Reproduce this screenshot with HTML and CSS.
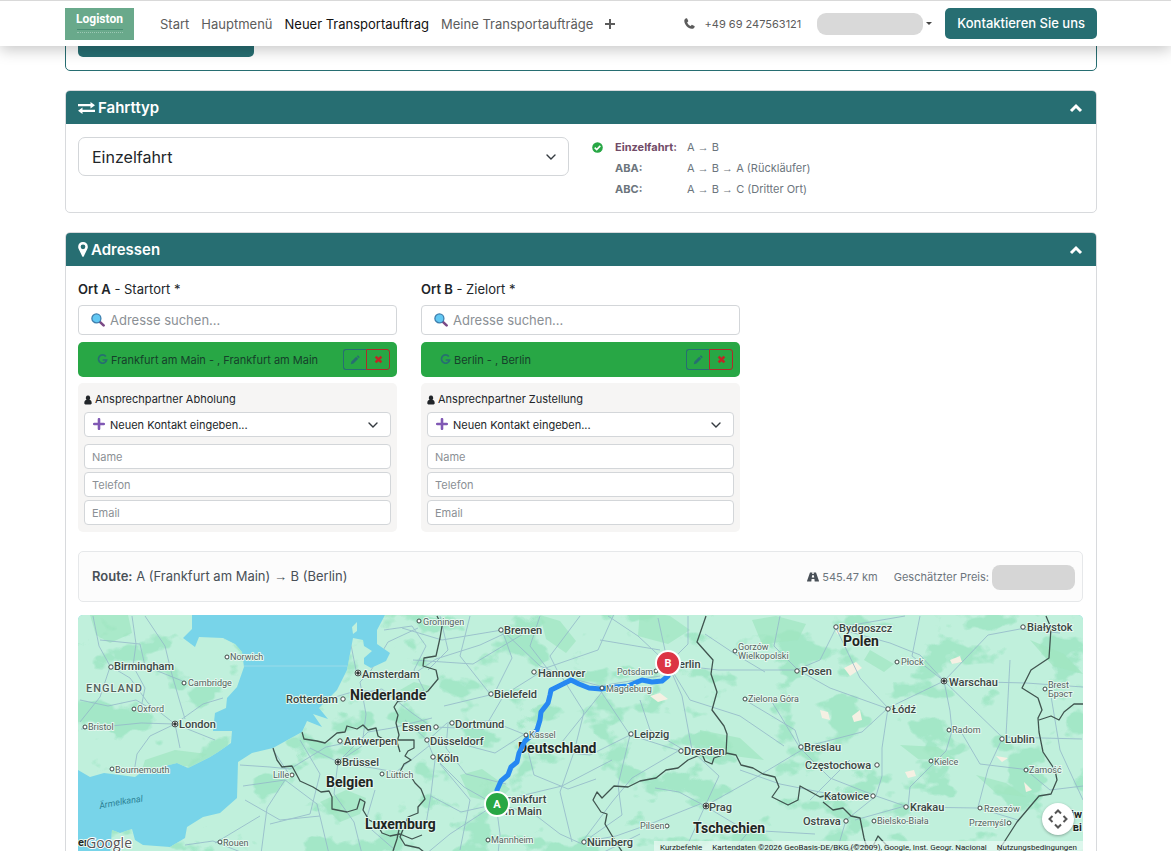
FILE: index.html
```html
<!DOCTYPE html>
<html lang="de">
<head>
<meta charset="utf-8">
<meta name="viewport" content="width=device-width, initial-scale=1">
<title>Neuer Transportauftrag – Logiston</title>
<link rel="stylesheet" href="styles.css">
</head>
<body>
<svg width="0" height="0" class="sprite" aria-hidden="true">
  <defs>
    <symbol id="i-search" viewBox="0 0 14 14">
      <path d="M8.6 8.6l4 3.8" stroke="#7b4a86" stroke-width="2.6" stroke-linecap="round"/>
      <circle cx="5.4" cy="5.4" r="4.5" fill="#62c8f3" stroke="#3d7fae" stroke-width="1.3"/>
    </symbol>
    <symbol id="i-plus" viewBox="0 0 12 12"><path d="M6 1.2v9.600M1.200 6h9.600" stroke="#8058b4" stroke-width="2.600" stroke-linecap="round"/></symbol>
    <symbol id="i-user" viewBox="0 0 10 12"><path d="M5 0.500a2.700 3 0 0 1 1.900 5.200C9 5.900 9.700 8 9.600 10c0 .900-.6 1.500-1.400 1.500H1.800C1 11.500.4 10.900.4 10 .3 8 1 5.900 3.100 5.700A2.700 3 0 0 1 5 .5z" fill="currentColor"/></symbol>
    <symbol id="i-up" viewBox="0 0 14 10"><path d="M2 8l5-5 5 5" fill="none" stroke="currentColor" stroke-width="3"/></symbol>
    <symbol id="i-pencil" viewBox="0 0 12 12"><path d="M1 11l.7-3.200L7.400 2.100l2.500 2.500-5.700 5.700zM8.100 1.400l.8-.7c.3-.3.7-.3 1 0l1.400 1.400c.3.3.3.7 0 1l-.7.800z" fill="currentColor"/></symbol>
    <symbol id="i-times" viewBox="0 0 10 10"><path d="M1.800 1.800l6.400 6.400M8.200 1.800L1.800 8.200" stroke="currentColor" stroke-width="2.800"/></symbol>
    <symbol id="i-google" viewBox="0 0 12 12"><path d="M9.600 2.700A4.500 4.500 0 1 0 10.500 6.500H6.200" fill="none" stroke="currentColor" stroke-width="1.800"/></symbol>
  </defs>
</svg>

<header class="topbar">
  <a class="logo" href="#" aria-label="Logiston"><span class="logo-name">Logiston</span><span class="logo-line"></span></a>
  <nav class="nav">
    <a href="#">Start</a>
    <a href="#">Hauptmenü</a>
    <a href="#" class="active">Neuer Transportauftrag</a>
    <a href="#">Meine Transportaufträge</a>
    <button class="more" aria-label="Mehr"><svg width="10" height="10" viewBox="0 0 10 10"><path d="M5 0v10M0 5h10" stroke="currentColor" stroke-width="2"/></svg></button>
  </nav>
  <a class="phone" href="tel:+4969247563121">
    <svg width="11" height="11" viewBox="0 0 11 11"><path d="M2.500.3C1.200.5.200 1.700.3 3c.3 3.800 3.600 7.400 7.400 7.800 1.500.1 2.800-.8 3-2.100 0-.3-.1-.5-.3-.6L8.300 6.900c-.3-.1-.5-.1-.7.1l-.9 1C5.300 7.400 3.700 5.900 3.100 4.400l1-.9c.2-.2.2-.4.1-.7L3.100.6C3 .4 2.800.3 2.500.3z" fill="currentColor"/></svg>
    <span>+49 69 247563121</span>
  </a>
  <button class="account" aria-label="Benutzerkonto"><span class="account-name"></span><span class="caret"></span></button>
  <a class="cta" href="#">Kontaktieren Sie uns</a>
</header>

<main class="page">
  <section class="card card-outline"><button class="peek" aria-label="Auftrag"></button></section>

  <section class="card">
    <h2 class="card-head">
      <svg width="17" height="12" viewBox="0 0 17 12"><path d="M0 3.200h14M3 8.800h14" stroke="currentColor" stroke-width="2.200"/><path d="M12.500 0L17 3.200l-4.500 3.200zM4.500 5.600L0 8.800 4.500 12z" fill="currentColor"/></svg>
      <span>Fahrttyp</span>
      <button class="toggle" aria-label="Fahrttyp einklappen"><svg width="14" height="10"><use href="#i-up"/></svg></button>
    </h2>
    <div class="card-body trip">
      <select class="select-lg" aria-label="Fahrttyp"><option>Einzelfahrt</option><option>ABA</option><option>ABC</option></select>
      <dl class="legend">
        <svg width="11" height="11" viewBox="0 0 11 11"><circle cx="5.500" cy="5.500" r="5.300" fill="#28a745"/><path d="M2.700 5.600l2 2 3.600-3.700" fill="none" stroke="#fff" stroke-width="1.600"/></svg>
        <dt class="on">Einzelfahrt:</dt><dd>A <i>→</i> B</dd>
        <dt>ABA:</dt><dd>A <i>→</i> B <i>→</i> A (Rückläufer)</dd>
        <dt>ABC:</dt><dd>A <i>→</i> B <i>→</i> C (Dritter Ort)</dd>
      </dl>
    </div>
  </section>

  <section class="card">
    <h2 class="card-head">
      <svg width="10" height="15" viewBox="0 0 9 14"><path fill-rule="evenodd" d="M4.500 0A4.400 4.400 0 0 1 9 4.400c0 1-.2 1.500-.5 2.100L5.300 13.200c-.3.800-1.300.8-1.600 0L.5 6.500C.2 5.900 0 5.400 0 4.400A4.400 4.400 0 0 1 4.500 0zm0 2.300a2.200 2.200 0 1 0 0 4.400 2.200 2.200 0 0 0 0-4.400z" fill="currentColor"/></svg>
      <span>Adressen</span>
      <button class="toggle" aria-label="Adressen einklappen"><svg width="14" height="10"><use href="#i-up"/></svg></button>
    </h2>
    <div class="card-body">
      <div class="places">
        <div class="place">
          <label class="place-label" for="a-search"><b>Ort A</b> - Startort *</label>
          <div class="field"><svg width="14" height="14"><use href="#i-search"/></svg><input id="a-search" class="search" placeholder="Adresse suchen..."></div>
          <div class="chosen"><svg width="11" height="11"><use href="#i-google"/></svg><span>Frankfurt am Main - , Frankfurt am Main</span>
            <div class="pair"><button aria-label="Bearbeiten"><svg width="10" height="10"><use href="#i-pencil"/></svg></button><button class="del" aria-label="Entfernen"><svg width="9" height="9"><use href="#i-times"/></svg></button></div></div>
          <div class="contact">
            <label for="a-contact"><svg width="8" height="10"><use href="#i-user"/></svg>Ansprechpartner Abholung</label>
            <div class="field"><svg width="12" height="12"><use href="#i-plus"/></svg><select id="a-contact" class="select-sm"><option>Neuen Kontakt eingeben...</option></select></div>
            <input placeholder="Name" aria-label="Name Abholung">
            <input placeholder="Telefon" aria-label="Telefon Abholung">
            <input placeholder="Email" aria-label="Email Abholung">
          </div>
        </div>
        <div class="place">
          <label class="place-label" for="b-search"><b>Ort B</b> - Zielort *</label>
          <div class="field"><svg width="14" height="14"><use href="#i-search"/></svg><input id="b-search" class="search" placeholder="Adresse suchen..."></div>
          <div class="chosen"><svg width="11" height="11"><use href="#i-google"/></svg><span>Berlin - , Berlin</span>
            <div class="pair"><button aria-label="Bearbeiten"><svg width="10" height="10"><use href="#i-pencil"/></svg></button><button class="del" aria-label="Entfernen"><svg width="9" height="9"><use href="#i-times"/></svg></button></div></div>
          <div class="contact">
            <label for="b-contact"><svg width="8" height="10"><use href="#i-user"/></svg>Ansprechpartner Zustellung</label>
            <div class="field"><svg width="12" height="12"><use href="#i-plus"/></svg><select id="b-contact" class="select-sm"><option>Neuen Kontakt eingeben...</option></select></div>
            <input placeholder="Name" aria-label="Name Zustellung">
            <input placeholder="Telefon" aria-label="Telefon Zustellung">
            <input placeholder="Email" aria-label="Email Zustellung">
          </div>
        </div>
      </div>

      <div class="route">
        <div class="route-text"><b>Route:</b> A (Frankfurt am Main) <i>→</i> B (Berlin)</div>
        <div class="route-meta">
          <span class="km"><svg width="12" height="10" viewBox="0 0 12 10"><path fill-rule="evenodd" d="M3 .5h2.400L5.200 2h1.600L6.600.5H9L12 9c0 .4-.2.6-.5.600H7.700L7.400 7H4.600l-.3 2.600H.5C.2 9.600 0 9.400 0 9zM5.100 3.200L4.800 5.600h2.400l-.3-2.400z" fill="currentColor"/></svg>545.47 km</span>
          <span>Geschätzter Preis:</span><span class="price"></span>
        </div>
      </div>

      <div class="map">
        <svg class="map-art" viewBox="78 615 1005 240" preserveAspectRatio="xMidYMid slice" role="img" aria-label="Karte der Route von Frankfurt am Main nach Berlin">
          <defs>
            <filter id="veg" x="0" y="0" width="1" height="1" color-interpolation-filters="sRGB">
              <feTurbulence type="fractalNoise" baseFrequency="0.022 0.03" numOctaves="4" seed="11"/>
              <feColorMatrix values="0 0 0 0 0.62  0 0 0 0 0.90  0 0 0 0 0.77  14 0 0 0 -8"/>
            </filter>
            <path id="land" d="M78 615H192V629L183 638 195 647 199 637 223 638 235 644 242 652 244 667 237 687 227 698 226 708 215 713 213 731 232 731 231 743 218 752 210 757 188 768 177 763 157 768 146 769 135 777 120 775 104 773 90 777 78 770ZM110 855L112 830 120 833 132 829 135 840 143 845 170 847 185 838 187 827 203 817 220 813 237 798 238 762 252 753 273 748 302 732 307 721 322 727 313 714 328 719 319 708 325 702 337 690 347 670 353 638 363 640 364 646 372 651 364 658 364 664 371 668 386 661 390 653 377 644 377 630 385 615H1083V855ZM352 627L357 622 357 631 353 634Z"/>
            <clipPath id="clip"><use href="#land"/></clipPath>
          </defs>
          <rect x="78" y="615" width="1005" height="240" fill="#78d4e9"/>
          <use href="#land" fill="#c0f0dc"/>
          <g clip-path="url(#clip)">
            <rect x="78" y="615" width="1005" height="240" filter="url(#veg)" opacity=".85"/>
            <g fill="#9fe5c1" opacity=".7">
              <path d="M90 615l38 0 4 18-22 10-14-8zM145 760l30-10 32 4-18 12-26 3-22 4zM320 802l26-12 20 8-6 16-20 8zM400 690l14-8 16 4-8 12zM540 615l20 6 16 20-10 12-20-14zM460 775l22-6 28 20-14 14-26-6zM752 620l24-4 30 8-8 16-36 4zM640 610l30 6 20 14-22 14-30-8zM700 730l40 8 24 22-30-4-34-12zM1030 640l34 14 19 20-30-8zM900 745l38 2 20 14-40-2zM870 650l24 14-10 8-20-12zM976 775l30 8 20 14-30-4z"/>
            </g>
            <g fill="#f5f0e3"><path d="M650 696l10-3 8 6-10 3zM844 668l12-6 6 6-12 8zM950 660l10-4 2 6-10 2zM820 710l8 2 2 8-8-2zM852 716l8-6 2 10-8 2zM905 772l9-2 2 6-8 2zM996 756l12 2-6 4zM1024 782l8 8-6 2zM835 630l6 2-3 3z"/></g>
            <g class="roads">
              <path d="M93 616l6 30 11 20 20 12 18 25 27 21M132 616l4 28-3 22 12 22-4 20M145 616l20 30 6 25 8 28 6 20M110 667l-10 30-20 25M175 724l-34-1-60 6M175 724l-25 12-13 18-3 18M175 724l5 24M175 724l40 16M175 724l28-20 20-6M100 640l40 4 5 22 40 16M80 700l28 6 28-6 20 12"/>
              <path d="M240 765l30 2 20 2 36-22 30-6M285 780l-18 28-6 46M285 780l32 24 12 50M285 780l-42 6M273 750l16 24M245 800l35 20 40-4M215 843l45-27M185 845l28-4 30 12M338 762l-28-14M338 762l24-16 4-32-6-32 10-10 18-30 30-14M338 762l58 10 38-30M338 762l-4 32 20 28 8 32M338 762l30-30 24-4 40-10M360 675l46 4 30-20 44-14 30-14M352 695l30-6 30 24 20 14"/>
              <path d="M434 727l50 2 20-34 40-25M434 757l30 30 32 18M427 741l20-18 44-2 40 16M405 720l22 20 8 20-4 34-5 30M431 796l30 16 36-8M496 804l4 30-2 20M496 804l38 10 26 20 22 10M496 804l-46 30-24 20M502 630l10 28-18 36-50 12M502 630l38 36 20 8 24 38-10 40-14 40 12 50M502 630l-60 10-40-12M540 670l58-20 16-36M540 670l60 16 60-10M600 690l30 45 50 16M602 692l-40 50M630 735l-12 50 4 30-40 28"/>
              <path d="M668 664l-30-28-30-20M668 664l-10-46M668 664l20-20 0-28M668 664l14 32 10 54M668 664l50 6 80 0M668 664l22 36 50 16 44 30M630 735l-40 20-40-4M582 842l30-40 20-24 46-27M582 842l34-6 34-12 50-20M705 806l-26-14-24-4M705 806l14-30-28-26M705 806l40 24 70 4M705 806l-18 40M705 806l50-28 50-30M735 654l30 18M735 654l-30-20M745 700l50 30 6 18M798 670l32 18 56 20M836 628l-16 32-24 10"/>
              <path d="M888 708l56-27M888 708l-6 40 0 28-6 20M888 708l-28-30-24-50M944 681l-24-26-30-12-54-15M944 681l44-46 32-6 40 4M944 681l6 30 2 20-6 20-36 36-2 20M944 681l58 56 80 2M944 681l82 2 57 4M1002 739l-14 30-10 38M800 748l62-16 26-24M800 748l30 30 46 18M876 796l32 11 70 1 40 12M876 796l-30 24-10 34M800 748l-28-46-27-3M920 616l-8 40 32 25M1050 690l10 60 23 50M1026 770l24 20 33-4M600 854l40-20M730 854l20-24M855 820l50-14"/>
              <path d="M384 630l28-4 14 20-12 24 10 20-20 12M440 616l8 34-20 20M470 616l-10 40 30 38M413 660l60 4 50-30M448 724l-2 24 20 26 40 10M465 745l30 8 28-18M460 850l10-50-30-36M524 735l10 40 34 14 28-10M540 616l-10 30 20 26M560 676l-10-20 30-40M600 640l60 10M612 760l-50 26-50 12M640 700l10 30 34 20M350 640l6 30M325 700l34-10 30 4M300 740l20 34-10 40-40 10M375 790l-10 34 30 26M780 616l-6 30 24 24M850 760l-40 40M960 730l20 34 50 6M905 616l-70 12M1010 660l-4 76M740 770l40 14 50 10"/>
            </g>
            <path class="border" d="M302 732l2 7 13 2 8 2 12-10 8-1 2-6 10 3 6-4 5 5 8-2 2 8 10 6 10-2 16 0 0 8-6 3-3 5 6 4-7 4-4 8 10 3 5 8 6 6 4 10-7 8 0 6-10 4-8 20 5 8 14 3 10 8 8 8M273 748l4 12 5 7 10-1 8 15 13 6 8 5 8-1 3 6 0 12 15 3 10-3 3-10 5 3-2 8 6 10 8 4 5 9 8 3 10-2 12 5 10-4M442 626l-2 12-4 18-12 2-1 8 13 4 2 9-10 12-14 8-16 2-4 6 4 8-2 8 3 12-2 7 3 10M393 851l4-12 3-14M437 616l5 10"/>
            <path class="border" d="M706 616l-9 26 16 18-2 14 6 18-5 18 12 16 3 8-1 20-12 4-2 6-7-3-3-7-14 6-10 8-12 2-10 8-16 3-12 6-14-1-12 12-5-6-4 8 8 12 6 2-2 10 12 20 12 18M726 753l10 2 5 10 12 3 10 6 12 3 4 10-7 10 16 8 10-5 2-14 20 11 8-2 10 5M823 802l10 8 10-2 8 8 9 2 4 20 3 10M848 851l8-6 16 3 6-12 12 13M1046 616l5 12-2 30-18 12-9 18 16 10 4 12-4 8 1 14 4 20 12 18 2 10-6 14-12 2-22 26-18 28 6 8M1039 720l12-4 8 4 5-8 10-8 9 0"/>
            <path d="M78 855v-6l12-2 12 8z" fill="#9fe5c1"/>
          </g>
          <path d="M244 666H347" stroke="#9adbe9"/>
          <path id="channel" d="M100 809q22-5 48-8" fill="none"/>
          <text class="water"><textPath href="#channel">Ärmelkanal</textPath></text>

          <g class="country">
            <text x="350" y="700">Niederlande</text><text x="326" y="787">Belgien</text><text x="365" y="829">Luxemburg</text>
            <text x="518" y="753">Deutschland</text><text x="693" y="833">Tschechien</text><text x="843" y="646">Polen</text>
          </g>
          <text class="region" x="86" y="692">ENGLAND</text>
          <path class="trail" d="M497 800l0-10 4-9 7-6 3-8 6-5 2-9 6-12 7-6 5-5 3-10 1-8 7-9 2-8 1-5 10-5 10-5 8 4 10 4 12 1 14-2 13-1 14-6 10 2 10-1 6-5"/>
          <g class="city">
            <circle cx="111" cy="667" r="2.200"/><text x="114" y="670">Birmingham</text>
            <circle cx="343" cy="699" r="2.200"/><text x="286" y="703">Rotterdam</text>
            <circle cx="340" cy="741" r="2.200"/><text x="344" y="745">Antwerpen</text>
            <circle cx="436" cy="727" r="2.200"/><text x="402" y="731">Essen</text>
            <circle cx="452" cy="723" r="2.200"/><text x="455" y="728">Dortmund</text>
            <circle cx="427" cy="740" r="2.200"/><text x="430" y="745">Düsseldorf</text>
            <circle cx="433" cy="757" r="2.200"/><text x="437" y="762">Köln</text>
            <circle cx="501" cy="630" r="2.200"/><text x="504" y="634">Bremen</text>
            <circle cx="534" cy="672" r="2.200"/><text x="538" y="677">Hannover</text>
            <circle cx="491" cy="694" r="2.200"/><text x="494" y="698">Bielefeld</text>
            <circle cx="631" cy="734" r="2.200"/><text x="634" y="738">Leipzig</text>
            <circle cx="681" cy="751" r="2.200"/><text x="684" y="755">Dresden</text>
            <circle cx="584" cy="842" r="2.200"/><text x="587" y="846">Nürnberg</text>
            <circle cx="797" cy="671" r="2.200"/><text x="801" y="675">Posen</text>
            <circle cx="836" cy="627" r="2.200"/><text x="839" y="632">Bydgoszcz</text>
            <circle cx="1023" cy="627" r="2.200"/><text x="1027" y="631">Białystok</text>
            <circle cx="888" cy="709" r="2.200"/><text x="892" y="713">Łódź</text>
            <circle cx="801" cy="747" r="2.200"/><text x="804" y="751">Breslau</text>
            <circle cx="877" cy="765" r="2.200"/><text x="805" y="769">Częstochowa</text>
            <circle cx="1002" cy="739" r="2.200"/><text x="1005" y="743">Lublin</text>
            <circle cx="873" cy="796" r="2.200"/><text x="824" y="800">Katowice</text>
            <circle cx="906" cy="807" r="2.200"/><text x="910" y="811">Krakau</text>
            <circle cx="846" cy="821" r="2.200"/><text x="803" y="825">Ostrava</text>
            <text x="679" y="668">erlin</text><text x="507" y="803">rankfurt</text><text x="505" y="815">m Main</text>
            <text x="362" y="678">Amsterdam</text><text x="179" y="728">London</text><text x="342" y="766">Brüssel</text>
            <text x="709" y="811">Prag</text><text x="949" y="686">Warschau</text>
            <text class="dark end" x="1082" y="818">iw</text><text class="dark end" x="1082" y="831">ві</text><text class="dark" x="78" y="846">er</text>
          </g>
          <g class="capital">
            <g><circle cx="358" cy="673" r="2.900"/><circle cx="175" cy="724" r="2.900"/><circle cx="338" cy="762" r="2.900"/><circle cx="706" cy="806" r="2.900"/><circle cx="944" cy="681" r="2.900"/></g>
            <g class="dot"><circle cx="358" cy="673" r="1.300"/><circle cx="175" cy="724" r="1.300"/><circle cx="338" cy="762" r="1.300"/><circle cx="706" cy="806" r="1.300"/><circle cx="944" cy="681" r="1.300"/></g>
          </g>
          <g class="town">
            <circle cx="227" cy="657" r="2"/><text x="230" y="660">Norwich</text>
            <circle cx="184" cy="683" r="2"/><text x="188" y="686">Cambridge</text>
            <circle cx="134" cy="709" r="2"/><text x="137" y="712">Oxford</text>
            <circle cx="85" cy="727" r="2"/><text x="88" y="730">Bristol</text>
            <circle cx="112" cy="769" r="2"/><text x="115" y="773">Bournemouth</text>
            <circle cx="220" cy="842" r="2"/><text x="223" y="846">Rouen</text>
            <circle cx="292" cy="775" r="2"/><text x="273" y="778">Lille</text>
            <circle cx="382" cy="774" r="2"/><text x="386" y="778">Lüttich</text>
            <circle cx="419" cy="621" r="2"/><text x="423" y="625">Groningen</text>
            <circle cx="526" cy="735" r="2"/><text x="529" y="738">Kassel</text>
            <circle cx="488" cy="840" r="2"/><text x="491" y="843">Mannheim</text>
            <circle cx="656" cy="671" r="2"/><text x="617" y="675">Potsdam</text>
            <circle cx="602" cy="688" r="2"/><text x="606" y="692">Magdeburg</text>
            <circle cx="735" cy="651" r="2"/><text x="738" y="650">Gorzów</text><text x="738" y="659">Wielkopolski</text>
            <circle cx="745" cy="699" r="2"/><text x="748" y="702">Zielona Góra</text>
            <circle cx="667" cy="826" r="2"/><text x="640" y="829">Pilsen</text>
            <circle cx="897" cy="662" r="2"/><text x="901" y="665">Płock</text>
            <circle cx="949" cy="730" r="2"/><text x="952" y="733">Radom</text>
            <circle cx="931" cy="761" r="2"/><text x="934" y="765">Kielce</text>
            <circle cx="1026" cy="770" r="2"/><text x="1029" y="773">Zamość</text>
            <circle cx="980" cy="808" r="2"/><text x="984" y="812">Rzeszów</text>
            <circle cx="1009" cy="823" r="2"/><text x="969" y="826">Przemyśl</text>
            <circle cx="874" cy="821" r="2"/><text x="877" y="824">Bielsko-Biała</text>
            <circle cx="1045" cy="689" r="2"/><text x="1048" y="688">Brest</text><text x="1048" y="697">Брэст</text>
          </g>
          <g class="pin">
            <circle cx="497" cy="804" r="12"/><text x="497" y="808">A</text>
            <circle class="goal" cx="668" cy="663" r="12"/><text x="668" y="667">B</text>
          </g>
          <text class="google" x="86" y="848">Google</text>
        </svg>
        <button class="map-move" aria-label="Kartenansicht bewegen"><svg width="20" height="20" viewBox="0 0 20 20"><path d="M7 4.500l3-3 3 3M7 15.500l3 3 3-3M4.500 7l-3 3 3 3M15.500 7l3 3-3 3" fill="none" stroke="#555" stroke-width="2"/></svg></button>
        <div class="credits"><a href="#">Kurzbefehle</a><span>Kartendaten ©2026 GeoBasis-DE/BKG (©2009), Google, Inst. Geogr. Nacional</span><a href="#">Nutzungsbedingungen</a></div>
      </div>
    </div>
  </section>
</main>
</body>
</html>
```
FILE: styles.css
```css
* { box-sizing: border-box; }
body {
  margin: 0;
  height: 100vh;
  overflow: hidden;
  background: #fff;
  color: #212529;
  font-family: Inter, "Noto Sans", sans-serif;
  font-size: 13px;
  line-height: 20px;
}
button, input, select { font: inherit; color: inherit; margin: 0; }
button { padding: 0; border: 0; background: none; cursor: pointer; }
a { color: inherit; text-decoration: none; }
i { font-family: "Liberation Sans", sans-serif; font-style: normal; line-height: 1; }
svg { flex: none; display: block; }
.sprite { position: absolute; }

/* top bar */
.topbar {
  position: relative;
  z-index: 5;
  display: flex;
  align-items: center;
  height: 46px;
  padding: 0 74px 0 65px;
  border-top: 1px solid #d9d9d9;
  background: #fff;
  box-shadow: 0 4px 14px rgba(0, 0, 0, .22);
  color: #5c5c5c;
}
.logo {
  display: flex;
  flex-direction: column;
  align-items: center;
  gap: 2px;
  width: 69px;
  height: 32px;
  padding-top: 4px;
  background: #69a98b;
  color: #fff;
}
.logo-name { font: 700 12px/15px "Roboto", sans-serif; }
.logo-line { width: 46px; height: 4px; border-top: 1px solid #4a8d74; border-bottom: 1px dotted #9cc8b4; }
.nav { display: flex; align-items: center; gap: 12px; margin-left: 26px; }
.nav .active { color: #111; }
.phone { display: flex; align-items: center; gap: 10px; margin-left: auto; font-size: 11px; }
.account { display: flex; align-items: center; gap: 3px; margin: 0 13px 0 16px; }
.account-name { width: 106px; height: 22px; border-radius: 9px; background: #d9d9d9; }
.caret { border: 3px solid transparent; border-top-color: #444; border-bottom: 0; }
.cta {
  padding: 5px 12px;
  border-radius: 5px;
  background: #276e72;
  color: #fff;
  font-weight: 500;
  line-height: 21px;
}

/* cards */
.page { display: flex; flex-direction: column; gap: 19px; padding: 0 74px 0 65px; }
.card { border: 1px solid #d8dadd; border-radius: 5px; background: #fff; }
.card-outline { margin-top: -7px; padding: 0 12px 13px; border-color: #276e72; }
.peek { display: block; width: 176px; height: 17px; border-radius: 0 0 5px 5px; background: #276e72; }
.card-head {
  display: flex;
  align-items: center;
  gap: 3px;
  margin: 0;
  padding: 6px 13px 6px 12px;
  border-radius: 4px 4px 0 0;
  background: #276e72;
  color: #fff;
  font-size: 15px;
  font-weight: 600;
  line-height: 21px;
}
.toggle { margin-left: auto; }
.card-body { padding: 13px 13px 12px 12px; }
.trip { display: grid; grid-template-columns: 491px 1fr; gap: 23px; align-items: start; }

/* form controls */
input, select {
  width: 100%;
  border: 1px solid #d3d6d9;
  border-radius: 4px;
  background-color: #fff;
  outline: 0;
}
input::placeholder { color: #8b9095; opacity: 1; }
select {
  appearance: none;
  background-image: url("data:image/svg+xml,%3Csvg xmlns='http://www.w3.org/2000/svg' viewBox='0 0 12 12'%3E%3Cpath d='M2 4l4 4 4-4' fill='none' stroke='%23343a40' stroke-width='1.400' stroke-linecap='round'/%3E%3C/svg%3E");
  background-repeat: no-repeat;
  background-position: right 11px center;
  background-size: 12px;
}
.select-lg { height: 39px; padding: 0 13px; border-radius: 7px; font-size: 16px; }
.legend {
  display: grid;
  grid-template-columns: 11px 60px 1fr;
  column-gap: 12px;
  align-items: center;
  margin: 0;
  color: #6c757d;
  font-size: 11px;
  line-height: 21px;
}
.legend dt { grid-column: 2; font-weight: 700; white-space: nowrap; }
.legend dd { grid-column: 3; margin: 0; }
.legend .on { color: #714b67; }

/* addresses */
.places { display: grid; grid-template-columns: repeat(2, 319px); gap: 24px; }
.place { display: flex; flex-direction: column; }
.place-label { margin-bottom: 6px; }
.place-label b { font-weight: 600; }
.field { position: relative; }
.field > svg { position: absolute; left: 13px; top: 8px; }
.search { display: block; height: 30px; padding: 0 31px; }
.chosen {
  display: flex;
  align-items: center;
  gap: 3px;
  height: 35px;
  margin: 7px 0 6px;
  padding: 0 7px 0 19px;
  border-radius: 5px;
  background: #28a745;
  color: #15412a;
  font-size: 11px;
}
.chosen > svg { color: #276e72; }
.pair { display: flex; margin-left: auto; }
.pair button {
  display: grid;
  place-items: center;
  width: 23px;
  height: 21px;
  border: 1px solid #276e72;
  border-right: 0;
  border-radius: 3px 0 0 3px;
  color: #276e72;
}
.pair .del { width: 24px; border: 1px solid #b02a2a; border-radius: 0 3px 3px 0; color: #c02626; }
.contact {
  display: flex;
  flex-direction: column;
  gap: 3px;
  padding: 7px 6px;
  border-radius: 5px;
  background: #f6f5f4;
  font-size: 11px;
}
.contact label { display: flex; align-items: center; gap: 3px; line-height: 19px; }
.contact input, .contact select { height: 25px; padding: 0 7px; }
.contact .field { margin-bottom: 4px; }
.contact .field > svg { left: 9px; top: 6px; }
.contact select { display: block; padding-left: 25px; }

/* route summary */
.route {
  display: flex;
  align-items: center;
  justify-content: space-between;
  margin: 19px 0 13px;
  padding: 12px 7px 11px 13px;
  border: 1px solid #e6e8ea;
  border-radius: 5px;
  background: #fcfcfc;
  color: #495057;
  line-height: 26px;
}
.route-text { align-self: flex-start; line-height: 24px; }
.route-text b { font-weight: 600; }
.route-meta { display: flex; align-items: center; gap: 3px; font-size: 11px; color: #6c757d; }
.km { display: flex; align-items: center; gap: 3px; margin-right: 13px; }
.km svg { color: #495057; }
.price { width: 83px; height: 25px; border-radius: 8px; background: #d6d6d6; }

/* map */
.map { position: relative; overflow: hidden; border-radius: 5px; }
.map-art { width: 100%; height: 240px; font-family: Roboto, sans-serif; }
.roads { fill: none; stroke: #93b7c9; stroke-width: 1; stroke-linejoin: round; opacity: .8; }
.border { fill: none; stroke: #40544f; stroke-width: 1.3; stroke-linejoin: round; }
.map-art text { paint-order: stroke; stroke: #e4f8ef; stroke-width: 2px; stroke-linejoin: round; }
.country { font-size: 14px; font-weight: 700; fill: #1f2624; }
.region { font-size: 11px; font-weight: 500; letter-spacing: 1px; fill: #52615c; }
.city { font-size: 11px; font-weight: 500; fill: #3b4643; }
.city .dark { font-weight: 700; fill: #1f2624; }
.city .end { text-anchor: end; }
.town { font-size: 9px; fill: #55625e; }
.city circle, .town circle, .capital circle { fill: #fff; stroke: #3b4643; stroke-width: 1; }
.capital .dot circle { fill: #222; }
.map-art .water { font-size: 9px; font-style: italic; fill: #2d8396; stroke: none; }
.trail { fill: none; stroke: #2688f2; stroke-width: 5; stroke-linejoin: round; stroke-linecap: round; }
.pin circle { fill: #28a745; stroke: #fff; stroke-width: 2; }
.pin .goal { fill: #dc3545; }
.map-art .pin text { font: 700 11px Roboto, sans-serif; fill: #fff; stroke: none; text-anchor: middle; }
.map-art .google { font: 500 14px "Open Sans", sans-serif; fill: #555; stroke: #fff; }
.map-move {
  position: absolute;
  right: 9px;
  top: 188px;
  display: grid;
  place-items: center;
  width: 32px;
  height: 32px;
  border-radius: 50%;
  background: #fff;
  box-shadow: 0 1px 3px rgba(0, 0, 0, .3);
}
.credits {
  position: absolute;
  right: 0;
  bottom: 0;
  display: flex;
  gap: 10px;
  padding: 0 6px;
  background: rgba(235, 250, 243, .7);
  color: #222;
  font: 8px/14px Roboto, sans-serif;
}
```
